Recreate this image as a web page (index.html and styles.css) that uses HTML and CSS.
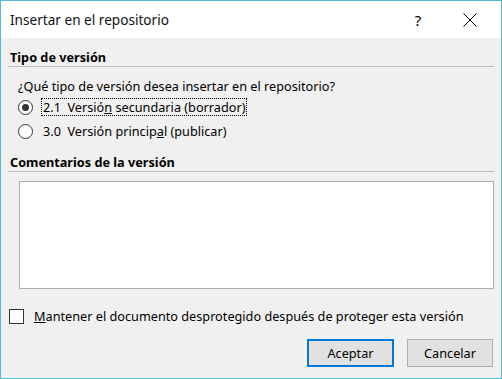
FILE: index.html
```html
<!DOCTYPE html>
<html lang="es">
<head>
  <meta charset="UTF-8">
  <title>Insertar en el repositorio</title>
  <link rel="stylesheet" href="styles.css">
</head>
<body>
  <div class="ventana">
    <div class="titulo">
      <span class="titulo-texto">Insertar en el repositorio</span>
      <span class="boton-ayuda">?</span>
      <span class="boton-cerrar">
        <svg width="14" height="14" viewBox="0 0 14 14">
          <path d="M0.5 0.5 L13.5 13.5 M13.5 0.5 L0.5 13.5" stroke="#000" stroke-width="1" fill="none"/>
        </svg>
      </span>
    </div>

    <div class="contenido">
      <div class="grupo">Tipo de versión</div>
      <p class="pregunta">¿Qué tipo de versión desea insertar en el repositorio?</p>

      <div class="opcion">
        <span class="radio marcado"></span>
        <span class="etiqueta foco">2.1&nbsp; Versió<u>n</u> secundaria (borrador)</span>
      </div>
      <div class="opcion">
        <span class="radio"></span>
        <span class="etiqueta">3.0&nbsp; Versión princip<u>a</u>l (publicar)</span>
      </div>

      <div class="grupo">Comentarios de la versión</div>
      <div class="comentarios"></div>

      <div class="casilla-fila">
        <span class="casilla"></span>
        <span class="etiqueta"><u>M</u>antener el documento desprotegido después de proteger esta versión</span>
      </div>

      <div class="botones">
        <span class="boton principal">Aceptar</span>
        <span class="boton">Cancelar</span>
      </div>
    </div>
  </div>
</body>
</html>
```

FILE: styles.css
```css
body {
  margin: 0;
  font-family: 'Noto Sans', sans-serif;
  font-size: 12.7px;
  color: #000;
}

.ventana {
  box-sizing: border-box;
  width: 502px;
  height: 379px;
  border: 1px solid #53bdd4;
  background: #f0f0f0;
}

.titulo {
  display: flex;
  align-items: center;
  height: 37px;
  background: #fff;
  padding-left: 9px;
}

.titulo-texto {
  flex: 1;
  font-size: 13.6px;
  color: #111;
}

.boton-ayuda {
  width: 46px;
  text-align: center;
  font-size: 15px;
  margin-right: 6px;
}

.boton-cerrar {
  width: 46px;
  display: flex;
  justify-content: center;
  margin-right: 8px;
}

.contenido {
  padding: 0 7px 0 7px;
}

.grupo {
  padding-top: 10px;
  line-height: 18px;
  font-weight: bold;
  border-bottom: 1px solid #bcbcbc;
  padding-left: 2px;
}

.pregunta {
  margin: 10px 0 0 10px;
  line-height: 18px;
}

.opcion {
  display: flex;
  align-items: center;
  height: 24px;
  padding-left: 10px;
}

.opcion:first-of-type {
  margin-top: 1px;
}

.radio {
  box-sizing: border-box;
  width: 15px;
  height: 15px;
  border: 1px solid #333;
  border-radius: 50%;
  background: #fff;
  margin-right: 8px;
  display: flex;
  align-items: center;
  justify-content: center;
}

.radio.marcado::after {
  content: "";
  width: 7px;
  height: 7px;
  border-radius: 50%;
  background: #333;
}

.etiqueta {
  line-height: 16px;
  padding: 0 1px;
  border: 1px dotted transparent;
}

.etiqueta.foco {
  border-color: #000;
}

.comentarios {
  box-sizing: border-box;
  height: 108px;
  margin: 9px 0 0 11px;
  background: #fff;
  border: 1px solid #adadad;
}

.casilla-fila {
  display: flex;
  align-items: center;
  height: 16px;
  margin-top: 19px;
  padding-left: 1px;
}

.casilla {
  box-sizing: border-box;
  width: 15px;
  height: 15px;
  border: 1px solid #333;
  background: #fff;
  margin-right: 8px;
}

.botones {
  display: flex;
  justify-content: flex-end;
  gap: 13px;
  margin-top: 15px;
  padding-right: 1px;
}

.boton {
  box-sizing: border-box;
  width: 86px;
  height: 28px;
  line-height: 26px;
  text-align: center;
  background: #e1e1e1;
  border: 1px solid #adadad;
}

.boton.principal {
  width: 87px;
  border: 2px solid #0078d7;
  line-height: 24px;
}
```
